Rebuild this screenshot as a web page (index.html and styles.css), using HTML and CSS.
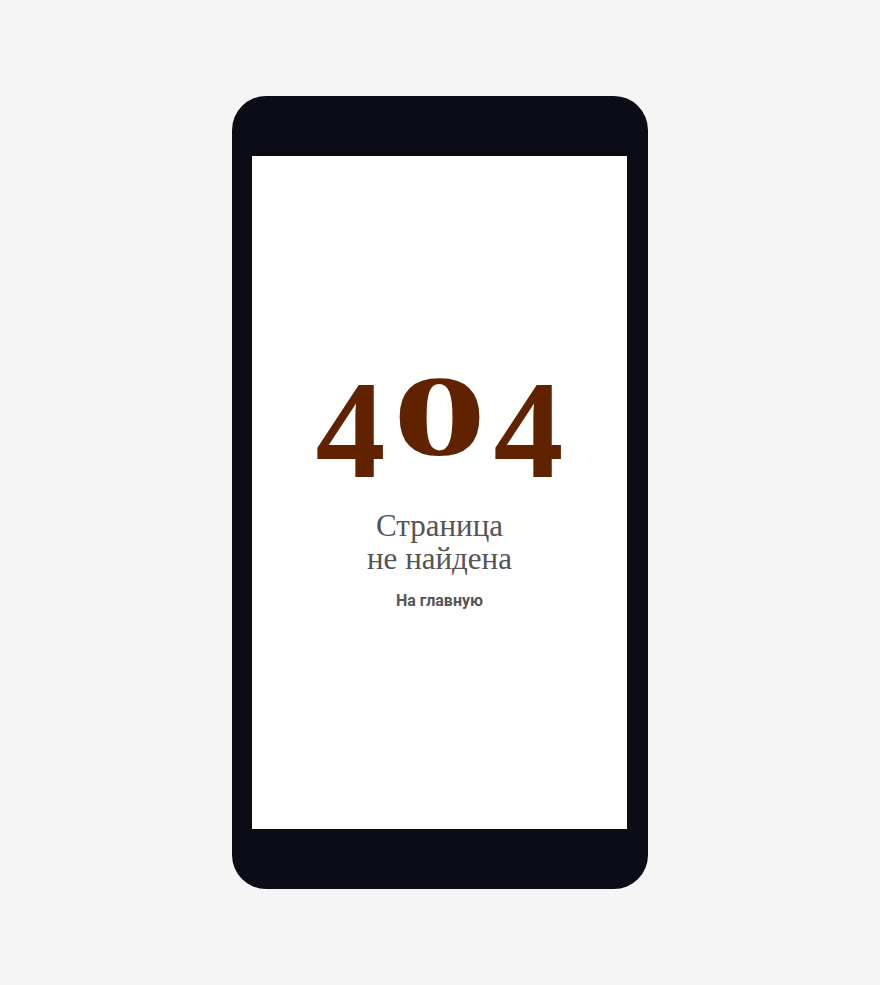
FILE: index.html
```html
<!DOCTYPE html>
<html lang="ru">
<head>
    <meta charset="UTF-8">
    <title>Страница не найдена</title>
    <link rel="stylesheet" href="styles.css">
</head>
<body>
<div class="page">
    <div class="phone">
        <div class="screen">
            <div class="error">
                <h1 class="code">4<span class="code-low">0</span>4</h1>
                <p class="title">Страница<br>не найдена</p>
                <a class="home-link" href="#">На главную</a>
            </div>
        </div>
    </div>
</div>
</body>
</html>
```

FILE: styles.css
```css
*{
    margin: 0;
    padding: 0;
    box-sizing: border-box;
}
html,body{
    height: 100%;
}
body{
    background: #f5f5f5;
    font-family: Roboto, "Liberation Sans", sans-serif;
}
.page{
    height: 100%;
    display: flex;
    align-items: center;
    justify-content: center;
}
.phone{
    background: #0b0c15;
    border-radius: 34px;
    padding: 60px 21px 60px 20px;
}
.screen{
    width: 375px;
    height: 673px;
    background: #fff;
    display: flex;
    align-items: center;
    justify-content: center;
}
.error{
    display: flex;
    flex-direction: column;
    align-items: center;
    text-align: center;
}
.code{
    font-family: "Liberation Serif", "DejaVu Serif", serif;
    font-weight: bold;
    font-size: 140px;
    line-height: 110px;
    height: 110px;
    color: #612200;
}
/* ноль пониже и пошире, как старостильная цифра */
.code-low{
    display: inline-block;
    font-size: 114px;
    line-height: 80px;
    vertical-align: 22px;
    transform: scaleX(1.65);
    margin: 0 26px 0 25px;
}
.title{
    margin-top: 24px;
    font-family: "Liberation Serif", "DejaVu Serif", serif;
    font-weight: normal;
    font-size: 31px;
    line-height: 33px;
    color: #555;
}
.home-link{
    margin-top: 16px;
    font-size: 16px;
    font-weight: bold;
    line-height: 20px;
    color: #555;
    text-decoration: none;
}
```
